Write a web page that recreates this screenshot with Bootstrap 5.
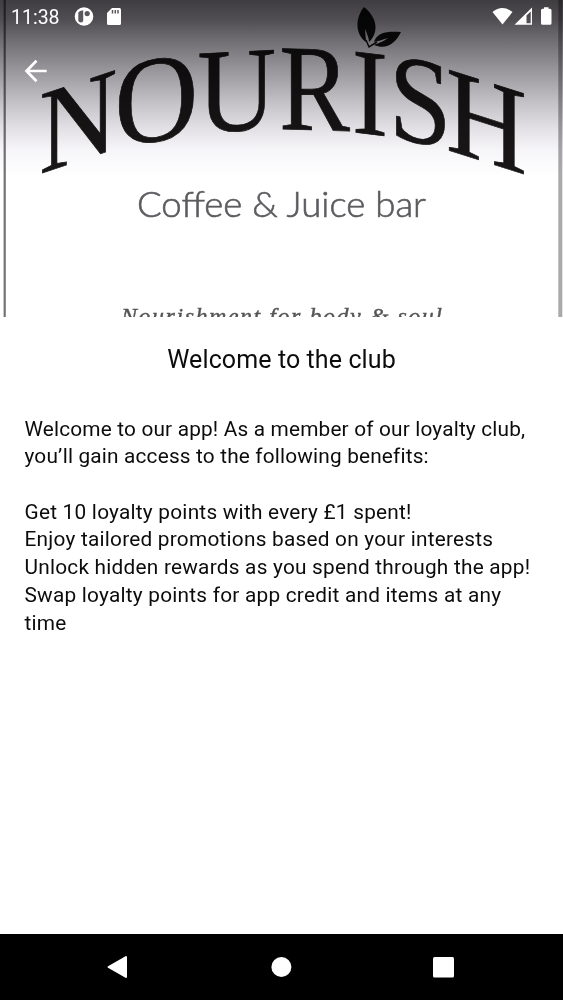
<!DOCTYPE html>
<html lang="en">
<head>
<meta charset="utf-8">
<meta name="viewport" content="width=device-width, initial-scale=1">
<title>Welcome to the club</title>
<link href="https://cdn.jsdelivr.net/npm/bootstrap@5.3.0/dist/css/bootstrap.min.css" rel="stylesheet">
<style>
body{font-family:Roboto,"Liberation Sans",sans-serif;color:#0c0c0c;background:#fff}
.hero{height:317px;background:#fff}
.hero-art{top:0;left:0;filter:blur(.6px)}
.wordmark{font-family:"Liberation Serif","Times New Roman",serif;font-size:100px;fill:#181616;stroke:#181616;stroke-width:.6}
.strapline{font-family:Lato,sans-serif;font-weight:300;font-size:35px;fill:#5c5c60;stroke:#5c5c60;stroke-width:.6}
.motto{font-family:"Liberation Serif","Times New Roman",serif;font-style:italic;font-size:24px;fill:#555;stroke:#555;stroke-width:.4}
.scrim{top:0;left:0;height:190px;background:linear-gradient(#403d41 0,#504e52 20px,#69676b 36px,#858387 56px,#a5a3a8 80px,#c4c2c6 103px,#e1dfe3 127px,#f6f5f8 150px,#fff 176px);mix-blend-mode:multiply}
.status{height:34px;padding:0 11px;color:#fff;font-size:19.5px}
.clock{width:49px;line-height:34px;padding-top:1px}
.back{margin:21px 0 0 20px;width:32px;height:32px}
.club-title{font-size:25px;line-height:32px;letter-spacing:.1px;margin:27px 0 0}
.club-copy{font-size:20.8px;line-height:27.7px;letter-spacing:.235px;padding:39.600px 20px 0 24.500px}
.intro{letter-spacing:.175px}
.sysnav{height:66px;background:#000}
</style>
</head>
<body>
<div class="d-flex flex-column vh-100 overflow-hidden">
  <header class="hero position-relative overflow-hidden flex-shrink-0">
    <svg class="hero-art position-absolute" width="563" height="317" viewBox="0 0 563 317">
      <path d="M4.7 0V317" stroke="#747276" stroke-width="2.2"/>
      <path d="M560.3 0V317" stroke="#aaa9ab" stroke-width="4"/>
      <g class="wordmark">
        <text transform="matrix(1.08 -.356 0 1.2 39.2 174)">N</text>
        <text transform="matrix(1.16 -.17 0 1.24 114.6 147)">O</text>
        <text transform="matrix(1.087 -.055 0 1.2 197.5 132.4)">U</text>
        <text transform="matrix(1.06 .03 0 1.23 279.2 129)">R</text>
        <text transform="matrix(1.08 .13 0 1.23 352 132)">I</text>
        <text transform="matrix(1.13 .22 0 1.25 388.8 136.700)">S</text>
        <text transform="matrix(1.12 .355 0 1.23 446 149.500)">H</text>
      </g>
      <g fill="#111">
        <path d="M364 7C355 18 355 34 366 42C366 37 365 33 365 29C367 34 369 38 369 42C378 34 379 19 364 7Z"/>
        <path d="M401 32C388 31 377 32 374 42C378 41 382 40 388 38C383 42 378 43 374 45C386 50 395 44 401 32Z"/>
        <path d="M366 40L369 47L377 42" fill="none" stroke="#111" stroke-width="1.5"/>
      </g>
      <text class="strapline" x="137" y="217" textLength="289" lengthAdjust="spacingAndGlyphs">Coffee &amp; Juice bar</text>
      <text class="motto" x="121" y="323.500" textLength="321">Nourishment for body &amp; soul</text>
    </svg>
    <div class="scrim position-absolute w-100"></div>
    <div class="position-relative">
      <div class="status d-flex align-items-center">
        <span class="clock">11:38</span>
        <svg style="margin-left:14px" width="20" height="20" viewBox="0 0 20 20"><circle cx="10" cy="9.500" r="9.300" fill="#fff"/><path d="M9.200 3.300V13.500Q9.200 15.500 7 15.500T4.300 13.500V5.500Q5.500 3.600 9.200 3.300Z" fill="#5a585c"/><circle cx="13.200" cy="6.600" r="2.600" fill="#5a585c"/></svg>
        <svg style="margin-left:12px" width="16" height="18" viewBox="0 0 16 18"><path d="M6 0H13.500Q15 0 15 1.500V15.500Q15 17 13.500 17H2.500Q1 17 1 15.500V5Z" fill="#fff"/><path d="M6.500 2V5.500M9.300 2V5.500M12 2V5.500" stroke="#5a585c" stroke-width="1.500"/></svg>
        <svg class="ms-auto" width="60" height="20" viewBox="0 0 60 20" fill="#fff"><path d="M.5 5Q10.300-3 20.500 5L10.500 17.500Z"/><path fill-rule="evenodd" d="M40 .5V17.800H22.500ZM38.700 4.500L34.500 8.500V16.300H38.700Z"/><path d="M52 .3H56.500V1.800H58Q59.500 1.800 59.500 3.300V16.300Q59.500 17.800 58 17.800H50.500Q49 17.800 49 16.300V3.300Q49 1.800 50.500 1.800H52Z"/></svg>
      </div>
      <svg class="back d-block" viewBox="0 0 32 32" fill="none" stroke="#fff" stroke-width="2.700"><path d="M26.700 16H7M16.500 5.800L6.500 16L16.500 26.200"/></svg>
    </div>
  </header>
  <main class="flex-grow-1">
    <h1 class="club-title text-center fw-normal">Welcome to the club</h1>
    <div class="club-copy"><span class="intro">Welcome to our app! As a member of our loyalty club,<br>you’ll gain access to the following benefits:</span><br><br>Get 10 loyalty points with every £1 spent!<br>Enjoy tailored promotions based on your interests<br>Unlock hidden rewards as you spend through the app!<br>Swap loyalty points for app credit and items at any<br>time</div>
  </main>
  <nav class="sysnav flex-shrink-0">
    <svg class="d-block" width="563" height="66" viewBox="0 0 563 66" fill="#fff"><path d="M108.500 33L126 23V43Z" stroke="#fff" stroke-width="2" stroke-linejoin="round"/><circle cx="281.400" cy="33" r="10"/><rect x="433" y="23" width="21" height="20.500" rx="1.500"/></svg>
  </nav>
</div>
<script src="https://cdn.jsdelivr.net/npm/bootstrap@5.3.0/dist/js/bootstrap.bundle.min.js"></script>
</body>
</html>
